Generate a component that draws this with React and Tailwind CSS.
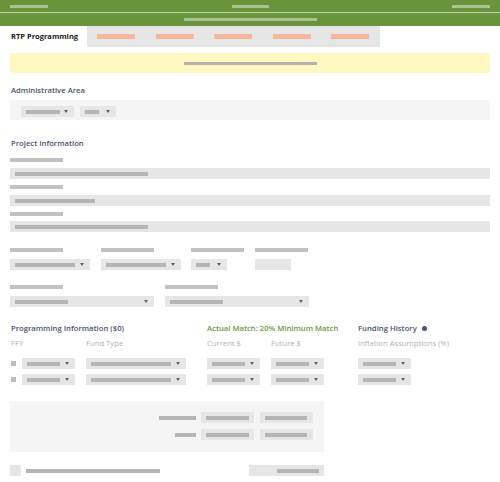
import React from "react";

// little grey placeholder bar
const Bar = ({ w, className = "" }) => (
  <div className={`h-[4px] bg-[#b5b5b5] ${className}`} style={{ width: w }} />
);

const Arrow = () => (
  <svg width="4" height="3" viewBox="0 0 4 3" className="shrink-0">
    <polygon points="0,0 4,0 2,3" fill="#5b6070" />
  </svg>
);

// fake select: grey box, placeholder bar, small arrow on the right
const Select = ({ w, bar, className = "" }) => (
  <div
    className={`h-[11px] bg-[#e6e6e6] flex items-center justify-between pl-[5px] pr-[6px] ${className}`}
    style={{ width: w }}
  >
    <Bar w={bar} />
    <Arrow />
  </div>
);

const Input = ({ w, bar, right = false, className = "" }) => (
  <div
    className={`h-[11px] bg-[#e6e6e6] flex items-center px-[5px] ${right ? "justify-end" : ""} ${className}`}
    style={{ width: w }}
  >
    {bar ? <Bar w={bar} /> : null}
  </div>
);

const Label = ({ w = 53 }) => <div className="h-[4px] bg-[#c2c2c2]" style={{ width: w }} />;

const Heading = ({ children, className = "" }) => (
  <div className={`text-[7.7px] leading-[10px] font-semibold text-[#4b5472] ${className}`}>{children}</div>
);

const Sub = ({ children, className = "" }) => (
  <div className={`text-[7.7px] leading-[10px] text-[#b3b3b3] ${className}`}>{children}</div>
);

const Check = () => <div className="w-[5px] h-[5px] bg-[#bdbdbd] shrink-0" />;

export default function App() {
  const tabs = [0, 1, 2, 3, 4];

  return (
    <div className="w-[500px] h-[482px] bg-white overflow-hidden" style={{ fontFamily: '"Open Sans", sans-serif' }}>
      {/* top bars */}
      <div className="h-[12px] bg-[#68943c] flex items-center justify-between px-[10px]">
        <div className="w-[38px] h-[3px] bg-[#a9c28f]" />
        <div className="w-[37px] h-[3px] bg-[#a9c28f]" />
        <div className="w-[38px] h-[3px] bg-[#a9c28f]" />
      </div>
      <div className="h-px bg-[#bfd0ad]" />
      <div className="h-[13px] bg-[#68943c] flex items-center justify-center">
        <div className="w-[133px] h-[3px] bg-[#a9c28f]" />
      </div>

      {/* tabs */}
      <div className="flex h-[21px]">
        <div className="w-[87px] flex items-center pl-[11px] text-[7.5px] font-bold text-[#222]">RTP Programming</div>
        <div className="w-[293px] bg-[#e6e6e6] flex items-center pl-[10px] gap-[20.5px]">
          {tabs.map((t) => (
            <div key={t} className="w-[38px] h-[5px] bg-[#f6b89b]" />
          ))}
        </div>
      </div>

      <div className="px-[10px]">
        {/* banner */}
        <div className="mt-[6px] h-[20px] bg-[#fff8c1] flex items-center justify-center">
          <div className="w-[133px] h-[3px] bg-[#b3b3b3]" />
        </div>

        {/* Administrative Area */}
        <Heading className="mt-[12px] pl-[1px]">Administrative Area</Heading>
        <div className="mt-[5px] h-[20px] bg-[#f5f5f5] flex items-center gap-[6px] pl-[11px] pt-[3px]">
          <Select w={53} bar={34} />
          <Select w={36} bar={14} />
        </div>

        {/* Project Information */}
        <Heading className="mt-[18px] pl-[1px]">Project Information</Heading>
        <div className="mt-[10px]">
          <Label />
        </div>
        <div className="mt-[6px]">
          <Input w="100%" bar={133} />
        </div>
        <div className="mt-[6px]">
          <Label />
        </div>
        <div className="mt-[6px]">
          <Input w="100%" bar={80} />
        </div>
        <div className="mt-[6px]">
          <Label />
        </div>
        <div className="mt-[5px]">
          <Input w="100%" bar={133} />
        </div>

        {/* four column row */}
        <div className="mt-[16px] flex">
          <div className="w-[91px]"><Label /></div>
          <div className="w-[90px]"><Label /></div>
          <div className="w-[64px]"><Label /></div>
          <div><Label /></div>
        </div>
        <div className="mt-[7px] flex">
          <div className="w-[91px]"><Select w={80} bar={60} /></div>
          <div className="w-[90px]"><Select w={80} bar={60} /></div>
          <div className="w-[64px]"><Select w={36} bar={14} /></div>
          <div><Input w={36} /></div>
        </div>

        {/* two column row */}
        <div className="mt-[15px] flex">
          <div className="w-[155px]"><Label /></div>
          <div><Label /></div>
        </div>
        <div className="mt-[7px] flex">
          <div className="w-[155px]"><Select w={144} bar={53} /></div>
          <div><Select w={144} bar={53} /></div>
        </div>

        {/* Programming Information */}
        <div className="mt-[16px] flex">
          <div className="w-[197px]">
            <Heading className="pl-[1px]">Programming Information ($0)</Heading>
            <div className="mt-[5px] flex">
              <Sub className="w-[76px] pl-[1px]">FFY</Sub>
              <Sub>Fund Type</Sub>
            </div>
            {[0, 1].map((r) => (
              <div key={r} className={`${r === 0 ? "mt-[10px]" : "mt-[5px]"} flex items-center`}>
                <div className="w-[12px] pl-[1px]"><Check /></div>
                <div className="w-[64px]"><Select w={53} bar={33} /></div>
                <Select w={100} bar={80} />
              </div>
            ))}
          </div>
          <div className="w-[151px]">
            <div className="text-[7.7px] leading-[10px] font-semibold text-[#6a9a3c]">Actual Match: 20% Minimum Match</div>
            <div className="mt-[5px] flex">
              <Sub className="w-[64px]">Current $</Sub>
              <Sub>Future $</Sub>
            </div>
            {[0, 1].map((r) => (
              <div key={r} className={`${r === 0 ? "mt-[10px]" : "mt-[5px]"} flex`}>
                <div className="w-[64px]"><Select w={53} bar={33} /></div>
                <Select w={53} bar={33} />
              </div>
            ))}
          </div>
          <div>
            <div className="flex items-center gap-[5px]">
              <Heading>Funding History</Heading>
              <div className="w-[5px] h-[5px] rounded-full bg-[#4b5472]" />
            </div>
            <Sub className="mt-[5px]">Inflation Assumptions (%)</Sub>
            <Select w={53} bar={33} className="mt-[10px]" />
            <Select w={53} bar={33} className="mt-[5px]" />
          </div>
        </div>

        {/* totals box */}
        <div className="mt-[16px] w-[314px] bg-[#f5f5f5] pt-[11px] pb-[12px] pr-[11px] flex flex-col items-end gap-[6px]">
          <div className="flex items-center gap-[5px]">
            <div className="w-[37px] h-[4px] bg-[#b5b5b5]" />
            <div className="flex gap-[6px]">
              <Input w={53} bar={43} />
              <Input w={53} bar={42} />
            </div>
          </div>
          <div className="flex items-center gap-[5px]">
            <div className="w-[21px] h-[4px] bg-[#b5b5b5]" />
            <div className="flex gap-[6px]">
              <Input w={53} bar={43} />
              <Input w={53} bar={42} />
            </div>
          </div>
        </div>

        {/* bottom row */}
        <div className="mt-[13px] w-[314px] flex items-center justify-between">
          <div className="flex items-center gap-[5px]">
            <div className="w-[11px] h-[11px] bg-[#e6e6e6]" />
            <div className="w-[134px] h-[4px] bg-[#b5b5b5]" />
          </div>
          <Input w={75} bar={42} right />
        </div>
      </div>
    </div>
  );
}
